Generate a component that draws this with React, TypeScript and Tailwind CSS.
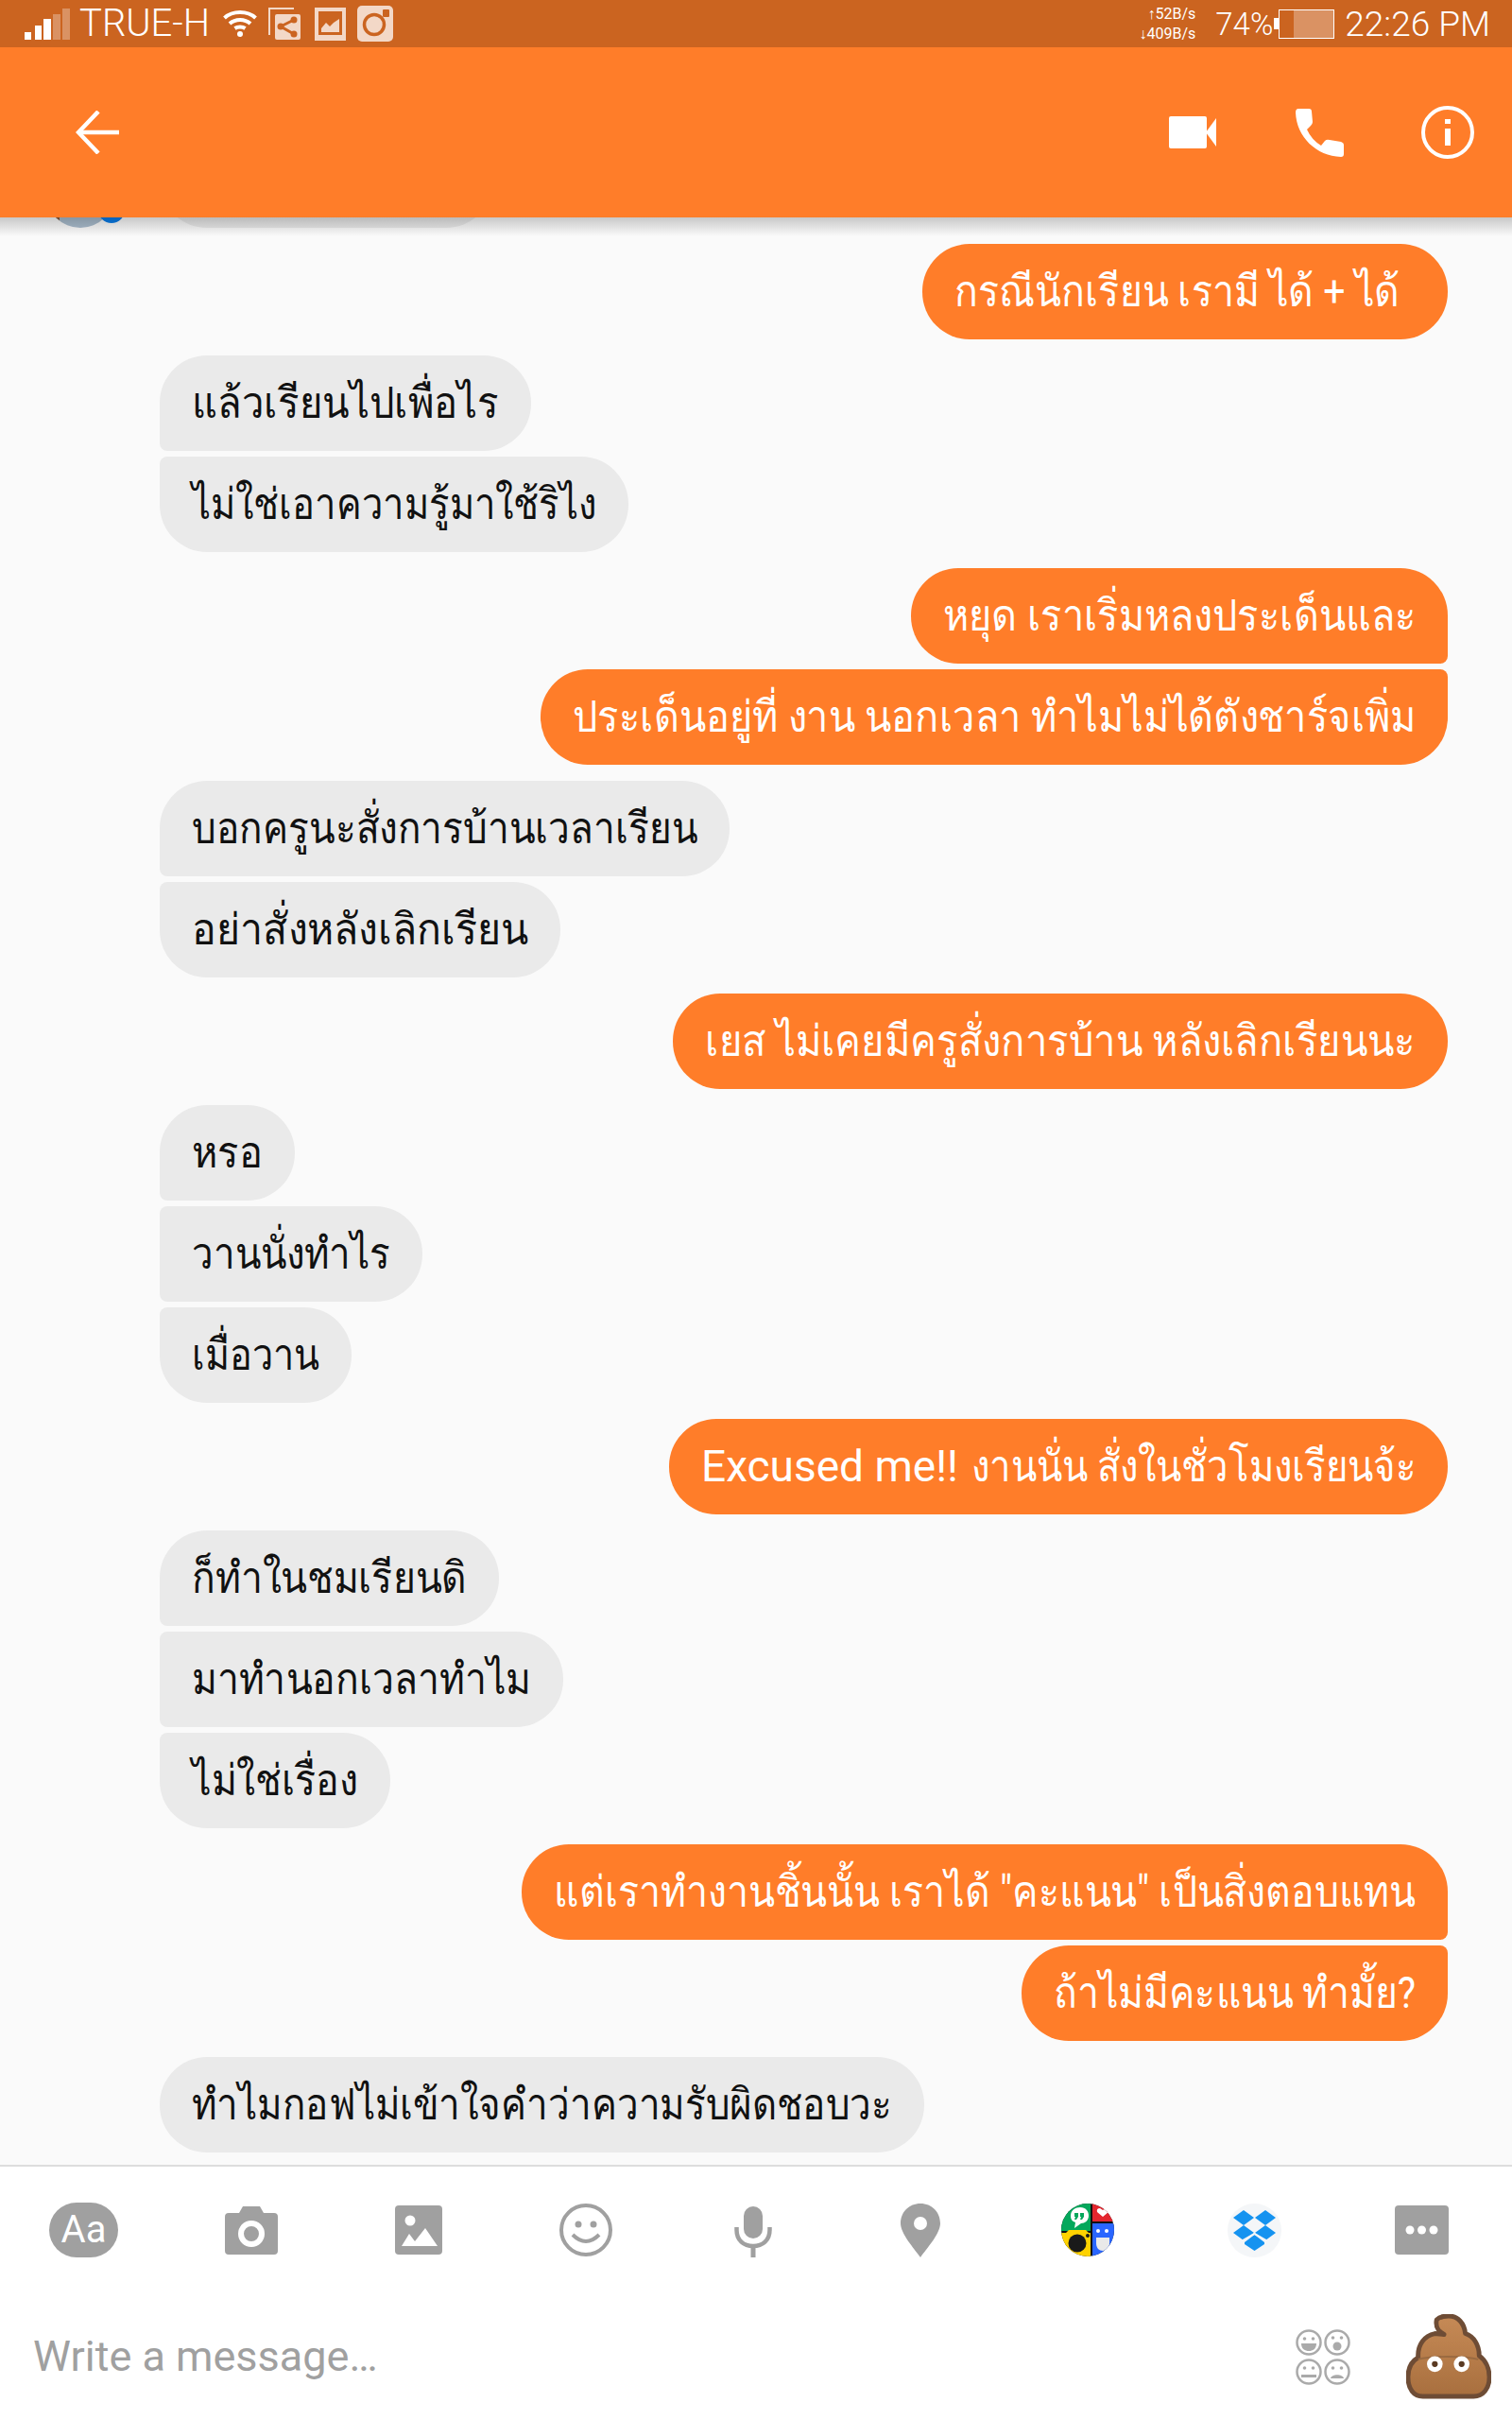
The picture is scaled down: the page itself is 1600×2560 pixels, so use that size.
import React, { useLayoutEffect, useRef, useState } from 'react';

type Msg = { text: string; me?: boolean; w: number; lead?: string; tw?: number };

// grouped runs of bubbles, top to bottom
const groups: Msg[][] = [
  [{ text: 'กรณีนักเรียน เรามี ได้ + ได้', me: true, w: 556, tw: 471 }],
  [
    { text: 'แล้วเรียนไปเพื่อไร', w: 393 },
    { text: 'ไม่ใช่เอาความรู้มาใช้ริไง', w: 496 },
  ],
  [
    { text: 'หยุด เราเริ่มหลงประเด็นและ', me: true, w: 568 },
    { text: 'ประเด็นอยู่ที่ งาน นอกเวลา ทำไมไม่ได้ตังชาร์จเพิ่ม', me: true, w: 960 },
  ],
  [
    { text: 'บอกครูนะสั่งการบ้านเวลาเรียน', w: 603 },
    { text: 'อย่าสั่งหลังเลิกเรียน', w: 424 },
  ],
  [{ text: 'เยส ไม่เคยมีครูสั่งการบ้าน หลังเลิกเรียนนะ', me: true, w: 820 }],
  [
    { text: 'หรอ', w: 143 },
    { text: 'วานนั่งทำไร', w: 278 },
    { text: 'เมื่อวาน', w: 203 },
  ],
  [{ lead: 'Excused me!!', text: 'งานนั่น สั่งในชั่วโมงเรียนจ้ะ', me: true, w: 824 }],
  [
    { text: 'ก็ทำในชมเรียนดิ', w: 359 },
    { text: 'มาทำนอกเวลาทำไม', w: 427 },
    { text: 'ไม่ใช่เรื่อง', w: 244 },
  ],
  [
    { text: 'แต่เราทำงานชิ้นนั้น เราได้ "คะแนน" เป็นสิ่งตอบแทน', me: true, w: 980 },
    { text: 'ถ้าไม่มีคะแนน ทำมั้ย?', me: true, w: 451 },
  ],
  [{ text: 'ทำไมกอฟไม่เข้าใจคำว่าความรับผิดชอบวะ', w: 809 }],
];

const cornerClass = (me: boolean, first: boolean, last: boolean) => {
  if (first && last) return 'rounded-[50px]';
  if (me) {
    if (first) return 'rounded-l-[50px] rounded-tr-[50px] rounded-br-[8px]';
    return 'rounded-l-[50px] rounded-tr-[8px] rounded-br-[50px]';
  }
  if (first) return 'rounded-r-[50px] rounded-tl-[50px] rounded-bl-[8px]';
  if (last) return 'rounded-r-[50px] rounded-tl-[8px] rounded-bl-[50px]';
  return 'rounded-r-[50px] rounded-l-[8px]';
};

// the Thai fallback font runs wider than the one in the picture, so squeeze each line to its bubble
const Bubble: React.FC<{ msg: Msg; first: boolean; last: boolean }> = ({ msg, first, last }) => {
  const textRef = useRef<HTMLSpanElement>(null);
  const leadRef = useRef<HTMLSpanElement>(null);
  const [sx, setSx] = useState(1);

  useLayoutEffect(() => {
    if (!textRef.current) return;
    const lead = leadRef.current ? leadRef.current.offsetWidth : 0;
    setSx(((msg.tw ?? msg.w - 68) - lead) / textRef.current.offsetWidth);
  }, [msg.w, msg.tw]);

  return (
    <div
      style={{ width: msg.w }}
      className={`h-[101px] shrink-0 flex items-center whitespace-nowrap text-[46px] pl-[34px] ${
        msg.me ? 'self-end bg-[#ff7d29] text-white' : 'self-start bg-[#eaeaea] text-[#111]'
      } ${cornerClass(!!msg.me, first, last)}`}
    >
      {msg.lead && (
        <span ref={leadRef} className="pr-[14px]">
          {msg.lead}
        </span>
      )}
      <span ref={textRef} style={{ transform: `scaleX(${sx})` }} className="inline-block origin-left">
        {msg.text}
      </span>
    </div>
  );
};

const SignalBars = () => (
  <svg width="48" height="33" viewBox="0 0 48 33" fill="white">
    <rect x="0" y="25" width="7" height="8" />
    <rect x="11" y="18" width="7" height="15" />
    <rect x="20" y="11" width="8" height="22" />
    <rect x="30" y="6" width="8" height="27" fillOpacity="0.3" />
    <rect x="40" y="0" width="8" height="33" fillOpacity="0.3" />
  </svg>
);

const WifiGlyph = () => (
  <svg width="36" height="30" viewBox="0 0 36 30" fill="none" stroke="white" strokeWidth="4">
    <path d="M1.5 9 C10 1 26 1 34.5 9" />
    <path d="M7 15 C13 9.5 23 9.5 29 15" />
    <path d="M12.5 20 C15.5 18 20.5 18 23.5 20" />
    <circle cx="18" cy="26" r="3" fill="white" stroke="none" />
  </svg>
);

const ShareGlyph = () => (
  <svg width="34" height="34" viewBox="0 0 34 34">
    <path d="M0 0 H27 V2 H2 V29 H0 Z" fill="#f3d8c7" />
    <rect x="7" y="7" width="27" height="27" rx="2" fill="#f3d8c7" />
    <path d="M27 13 L13 20 L27 28" fill="none" stroke="#cb6420" strokeWidth="3" />
    <circle cx="13" cy="20" r="3.5" fill="#cb6420" />
    <circle cx="27" cy="13" r="3.5" fill="#cb6420" />
    <circle cx="27" cy="28" r="3.5" fill="#cb6420" />
  </svg>
);

const PictureGlyph = () => (
  <svg width="33" height="35" viewBox="0 0 33 35">
    <rect width="33" height="35" fill="#f3d8c7" />
    <rect x="4" y="4" width="25" height="25" fill="#cb6420" />
    <path d="M7 26 V22 L12 16 L16 20 L20 16 L26 12 V26 Z" fill="#f3d8c7" />
  </svg>
);

const InstaGlyph = () => (
  <svg width="38" height="38" viewBox="0 0 38 38">
    <rect width="38" height="38" rx="5" fill="#f3d8c7" />
    <circle cx="18" cy="20" r="10.5" fill="none" stroke="#cb6420" strokeWidth="3.5" />
    <rect x="27" y="4" width="7" height="8" rx="1" fill="#cb6420" />
  </svg>
);

const VideoGlyph = () => (
  <svg width="50" height="34" viewBox="0 0 50 34" fill="white">
    <rect width="40" height="34" rx="2" />
    <path d="M39 17 L50 2 V32 Z" />
  </svg>
);

const PhoneGlyph = () => (
  <svg width="51" height="51" viewBox="0 0 51 51" fill="white">
    <path d="M3 0 H14 Q17 0 17 3 L18 14 Q18 16 16 18 L12 22 Q17 33 27 39 L31 34 Q33 32 36 33 L48 35 Q51 36 51 38 V48 Q51 51 48 51 C22 50 1 30 0 4 Q0 0 3 0 Z" />
  </svg>
);

const InfoGlyph = () => (
  <svg width="56" height="56" viewBox="0 0 56 56" fill="white">
    <circle cx="28" cy="28" r="26" fill="none" stroke="white" strokeWidth="4" />
    <rect x="25" y="14" width="6" height="5" />
    <rect x="25" y="24" width="6" height="18" />
  </svg>
);

const BackGlyph = () => (
  <svg width="46" height="46" viewBox="0 0 46 46" fill="none" stroke="white" strokeWidth="4.5">
    <path d="M46 23 H3" />
    <path d="M24 1 L3 23 L24 45" />
  </svg>
);

const CameraGlyph = () => (
  <svg width="56" height="51" viewBox="0 0 56 51">
    <path d="M4 7 H15 L19 0 H37 L41 7 H52 Q56 7 56 11 V47 Q56 51 52 51 H4 Q0 51 0 47 V11 Q0 7 4 7 Z" fill="#a0a0a0" />
    <circle cx="28" cy="29" r="11" fill="none" stroke="white" strokeWidth="6" />
  </svg>
);

const PhotoGlyph = () => (
  <svg width="50" height="52" viewBox="0 0 50 52">
    <rect width="50" height="52" rx="4" fill="#a0a0a0" />
    <circle cx="16" cy="16" r="5.5" fill="white" />
    <path d="M7 43 L15 30 L21 38 L32 24 L45 43 Z" fill="white" />
  </svg>
);

const SmileGlyph = () => (
  <svg width="56" height="58" viewBox="0 0 56 58" fill="none" stroke="#a0a0a0" strokeWidth="4">
    <circle cx="28" cy="29" r="26" />
    <circle cx="20" cy="23" r="3.5" fill="#a0a0a0" stroke="none" />
    <circle cx="36" cy="23" r="3.5" fill="#a0a0a0" stroke="none" />
    <path d="M14 34 Q28 48 42 34" />
  </svg>
);

const MicGlyph = () => (
  <svg width="40" height="54" viewBox="0 0 40 54" fill="none" className="mt-[4px]">
    <rect x="10" y="0" width="20" height="34" rx="10" fill="#a0a0a0" />
    <path d="M2.5 22 V25 C2.5 36 10 42 20 42 C30 42 37.5 36 37.5 25 V22" stroke="#a0a0a0" strokeWidth="4.5" />
    <rect x="17.5" y="41" width="5" height="13" fill="#a0a0a0" />
  </svg>
);

const PinGlyph = () => (
  <svg width="42" height="57" viewBox="0 0 42 57">
    <path d="M21 0 C33 0 42 9 42 21 C42 32 28 47 21 57 C14 47 0 32 0 21 C0 9 9 0 21 0 Z" fill="#a0a0a0" />
    <circle cx="21" cy="21" r="7" fill="white" />
  </svg>
);

// four-colour sticker pack badge
const PackGlyph = () => (
  <svg width="56" height="56" viewBox="0 0 56 56">
    <defs>
      <clipPath id="pack-clip">
        <circle cx="28" cy="28" r="28" />
      </clipPath>
    </defs>
    <g clipPath="url(#pack-clip)">
      <rect width="56" height="56" fill="#111" />
      <rect x="0" y="0" width="31" height="29" fill="#04a85c" />
      <rect x="33" y="0" width="23" height="19" fill="#e3262e" />
      <rect x="0" y="31" width="31" height="25" fill="#ffd200" />
      <path d="M0 31 H5 L8 28 H26 L31 33 V31 H0 Z" fill="#ffd200" />
      <rect x="33" y="21" width="23" height="35" fill="#2a66ff" />
      <path d="M10 13 C10 7 15 4 20 4 C26 4 29 8 29 13 C29 18 25 21 21 21 L14 26 L15 20 C12 19 10 17 10 13 Z" fill="white" />
      <path d="M14 10 H18 V14 L16 17 H14 L15 14 H14 Z M20 10 H24 V14 L22 17 H20 L21 14 H20 Z" fill="#04a85c" />
      <path d="M44 14 L38 9 Q37 5 41 5 L44 7 L47 5 Q51 5 50 9 Z" fill="white" />
      <circle cx="17" cy="42" r="9.5" fill="#1a1a1a" />
      <circle cx="28" cy="34" r="2" fill="#1a1a1a" />
      <circle cx="39" cy="29" r="2" fill="white" />
      <circle cx="48" cy="29" r="2" fill="white" />
      <path d="M37 36 H51 V42 C51 47 48 50 44 50 C40 50 37 47 37 42 Z" fill="#e9e9e9" />
    </g>
  </svg>
);

const DropboxGlyph = () => (
  <svg width="57" height="57" viewBox="0 0 57 57">
    <circle cx="28.5" cy="28.5" r="28.5" fill="#f4f6f8" />
    <g fill="#1593f0">
      <path d="M17 7 L28 15 L17 23 L6 15 Z" />
      <path d="M40 7 L51 15 L40 23 L29 15 Z" />
      <path d="M17 23 L28 31 L17 39 L6 31 Z" />
      <path d="M40 23 L51 31 L40 39 L29 31 Z" />
      <path d="M28.5 33 L39 41 L39 43 L28.5 50 L18 43 L18 41 Z" />
    </g>
    <path d="M16 39 L28.5 32 L41 39" fill="none" stroke="#f4f6f8" strokeWidth="2" />
  </svg>
);

const MoreGlyph = () => (
  <svg width="57" height="52" viewBox="0 0 57 52">
    <rect width="57" height="52" rx="4" fill="#a0a0a0" />
    <circle cx="16" cy="26" r="4.5" fill="white" />
    <circle cx="28.5" cy="26" r="4.5" fill="white" />
    <circle cx="41" cy="26" r="4.5" fill="white" />
  </svg>
);

const FacesGlyph = () => (
  <svg width="58" height="59" viewBox="0 0 58 59" fill="none" stroke="#aaaaaa" strokeWidth="2.5">
    <circle cx="14" cy="14" r="12.5" />
    <circle cx="44" cy="14" r="12.5" />
    <circle cx="14" cy="45" r="12.5" />
    <circle cx="44" cy="45" r="12.5" />
    <g fill="#aaaaaa" stroke="none">
      <circle cx="9.5" cy="10" r="1.8" />
      <circle cx="18.5" cy="10" r="1.8" />
      <path d="M6 15 H22 C22 21 18 23 14 23 C10 23 6 21 6 15 Z" />
      <circle cx="39.5" cy="9" r="1.8" />
      <circle cx="48.5" cy="9" r="1.8" />
      <circle cx="44" cy="18" r="4.5" />
      <circle cx="9.5" cy="41" r="1.8" />
      <circle cx="18.5" cy="41" r="1.8" />
      <rect x="6" y="48" width="16" height="3" />
      <circle cx="39.5" cy="41" r="1.8" />
      <circle cx="48.5" cy="41" r="1.8" />
      <path d="M37 52 C38 47 50 47 51 52 Z" />
    </g>
  </svg>
);

const PoopGlyph = () => (
  <svg width="90" height="90" viewBox="-1 -1 92 92">
    <defs>
      <linearGradient id="poop-fill" x1="0" y1="0" x2="0" y2="1">
        <stop offset="0" stopColor="#c68a56" />
        <stop offset="1" stopColor="#a86f3e" />
      </linearGradient>
    </defs>
    <path
      d="M32 5 C36 1 41 1 45 1 C55 1 62 9 63 20 C72 23 78 32 78 44 C85 49 89 58 89 67 C89 80 82 88 72 88 L17 88 C7 88 1 80 1 67 C1 58 5 50 12 46 C11 32 19 22 30 20 L40 21 C36 19 30 14 32 5 Z"
      fill="url(#poop-fill)"
      stroke="#6e4c35"
      strokeWidth="5"
      strokeLinejoin="round"
    />
    <path d="M12 48 C25 44 64 44 77 48" fill="none" stroke="#9a6a41" strokeWidth="2" />
    <circle cx="30" cy="53" r="8.5" fill="white" />
    <circle cx="59" cy="53" r="8.5" fill="white" />
    <circle cx="30" cy="53" r="3.2" fill="#5a3a22" />
    <circle cx="59" cy="53" r="3.2" fill="#5a3a22" />
  </svg>
);

const toolbar = [
  <div key="aa" className="w-[73px] h-[58px] rounded-full bg-[#a0a0a0] text-white text-[40px] flex items-center justify-center leading-none">
    Aa
  </div>,
  <CameraGlyph key="camera" />,
  <PhotoGlyph key="photo" />,
  <SmileGlyph key="smile" />,
  <MicGlyph key="mic" />,
  <PinGlyph key="pin" />,
  <PackGlyph key="pack" />,
  <DropboxGlyph key="dropbox" />,
  <MoreGlyph key="more" />,
];

export default function App() {
  return (
    <div className="w-[1600px] h-[2560px] flex flex-col overflow-hidden bg-[#fafafa] font-['Roboto','Noto_Sans',sans-serif]">
      {/* status bar */}
      <div className="h-[50px] bg-[#cb6420] text-white flex items-center pl-[26px] pr-[23px] shrink-0">
        <SignalBars />
        <span className="ml-[10px] text-[40px] font-light leading-none">TRUE-H</span>
        <span className="ml-[14px]"><WifiGlyph /></span>
        <span className="ml-[12px]"><ShareGlyph /></span>
        <span className="ml-[15px]"><PictureGlyph /></span>
        <span className="ml-[12px]"><InstaGlyph /></span>
        <div className="ml-auto flex flex-col items-end text-[16px] leading-[21px] mr-[21px]">
          <span>↑52B/s</span>
          <span>↓409B/s</span>
        </div>
        <span className="text-[33px] font-light leading-none">74%</span>
        <div className="ml-[1px] flex items-center">
          <div className="w-[5px] h-[12px] bg-white" />
          <div className="w-[59px] h-[31px] border border-white flex justify-end">
            <div className="w-[42px] bg-white/30" />
          </div>
        </div>
        <span className="ml-[11px] text-[37px] font-light leading-none">22:26 PM</span>
      </div>

      {/* conversation header */}
      <div className="h-[180px] bg-[#ff7d29] flex items-center shrink-0 pl-[80px] pr-[40px] relative z-10">
        <BackGlyph />
        <span className="ml-auto"><VideoGlyph /></span>
        <span className="ml-[84px]"><PhoneGlyph /></span>
        <span className="ml-[82px]"><InfoGlyph /></span>
      </div>

      {/* messages */}
      <div className="relative flex-1 flex flex-col gap-[17px] pl-[169px] pr-[68px] overflow-hidden">
        <div className="relative w-[353px] h-[101px] mt-[-90px] shrink-0 bg-[#eaeaea] rounded-[50px]">
          <div className="absolute left-[-120px] bottom-0 w-[72px] h-[72px] rounded-full bg-[#a9bccd] overflow-hidden">
            <div className="absolute left-0 bottom-0 w-[14px] h-[12px] bg-[#8a5a3a]" />
          </div>
          <div className="absolute left-[-65px] bottom-[5px] w-[28px] h-[28px] rounded-full bg-[#0a7ce8]" />
        </div>
        {groups.map((g, i) => (
          <div key={i} className="flex flex-col gap-[6px] shrink-0">
            {g.map((m, j) => (
              <Bubble key={j} msg={m} first={j === 0} last={j === g.length - 1} />
            ))}
          </div>
        ))}
        <div className="absolute top-0 left-0 right-0 h-[20px] bg-gradient-to-b from-black/20 to-transparent" />
      </div>

      {/* composer */}
      <div className="h-[270px] bg-white border-t-2 border-[#dddddd] shrink-0">
        <div className="flex h-[134px] items-center">
          {toolbar.map((icon, i) => (
            <div key={i} className="w-[177px] flex justify-center">
              {icon}
            </div>
          ))}
        </div>
        <div className="flex items-center pl-[35px] pr-[22px] h-[134px]">
          <span className="text-[45px] text-[#a0a0a0]">Write a message…</span>
          <span className="ml-auto"><FacesGlyph /></span>
          <span className="ml-[59px]"><PoopGlyph /></span>
        </div>
      </div>
    </div>
  );
}
